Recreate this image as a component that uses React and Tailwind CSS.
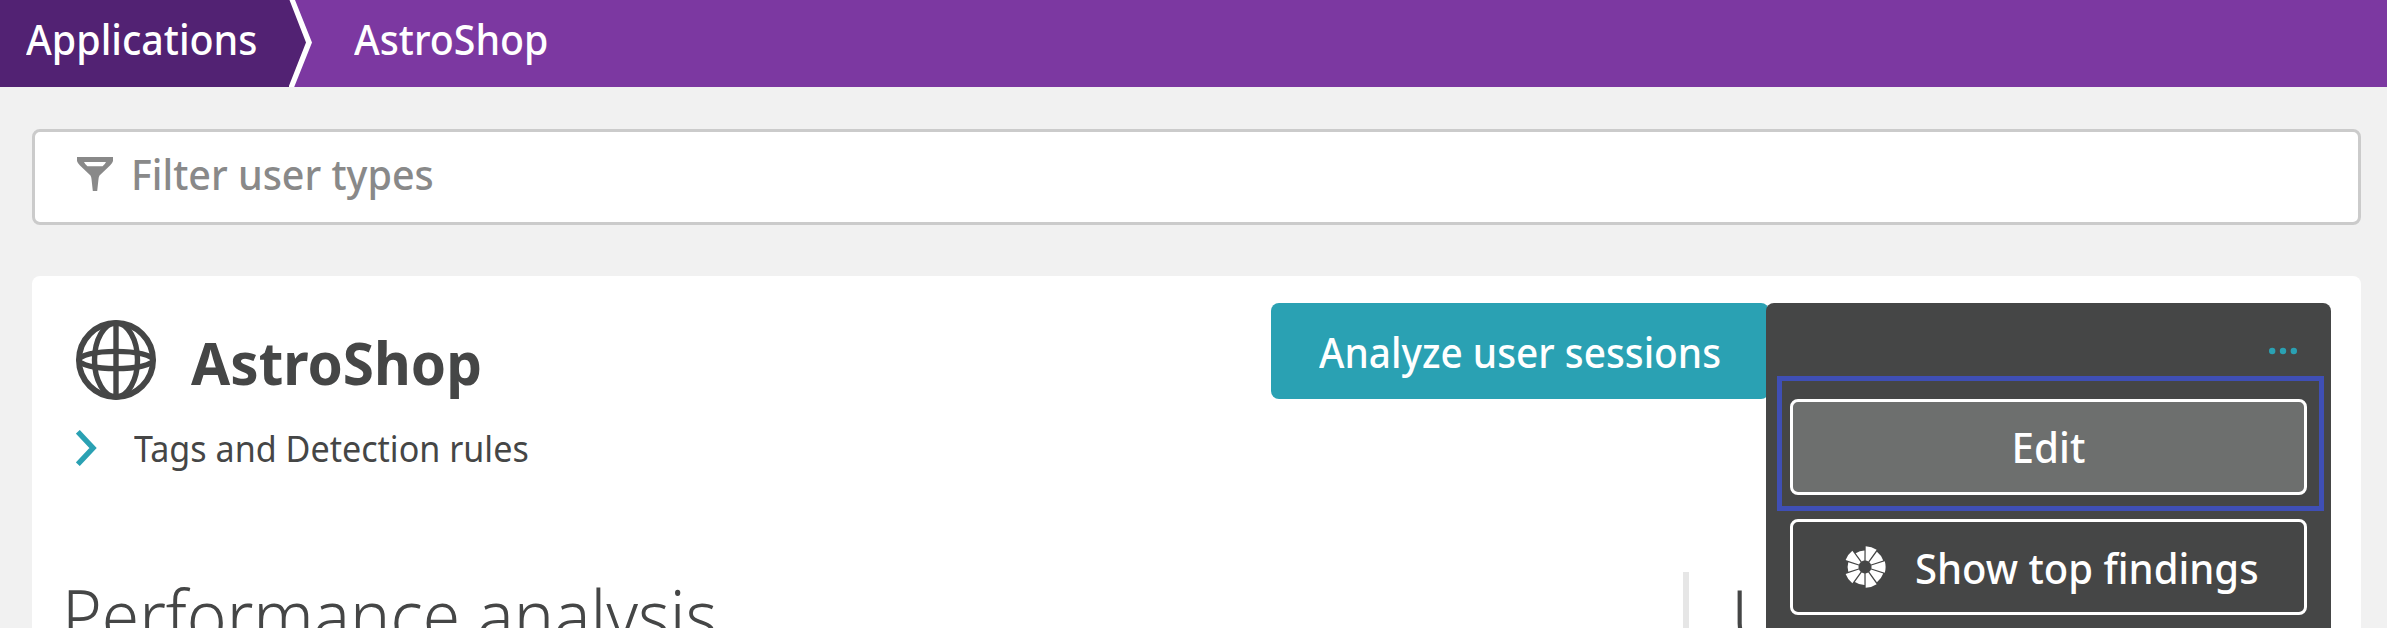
const WEDGE_RADII = [20.8, 19.4, 20.6, 19.4, 20.8, 18, 20.6, 17.4, 20.6, 16.6];

function wedgePath(index, radius) {
  const inner = 6.5;
  const at = (r, deg) => {
    const a = (deg * Math.PI) / 180;
    return `${(21 + r * Math.sin(a)).toFixed(2)} ${(21 - r * Math.cos(a)).toFixed(2)}`;
  };
  const start = index * 36;
  const end = start + 36;
  // angular inset keeps the gap between wedges parallel
  const go = 1.9;
  const gi = 5.5;
  return `M${at(inner, start + gi)}L${at(radius, start + go)}A${radius} ${radius} 0 0 1 ${at(radius, end - go)}L${at(inner, end - gi)}A${inner} ${inner} 0 0 0 ${at(inner, start + gi)}Z`;
}

function FindingsIcon() {
  return (
    <svg className="ml-[51px] size-[42px] shrink-0" viewBox="0 0 42 42" fill="#fff">
      {WEDGE_RADII.map((r, i) => (
        <path key={i} d={wedgePath(i, r)} />
      ))}
    </svg>
  );
}

function GlobeIcon() {
  return (
    <svg className="mt-11 size-20 shrink-0" viewBox="0 0 80 80" fill="none" stroke="#454646">
      <circle cx="40" cy="40" r="37" strokeWidth="6" />
      <ellipse cx="40" cy="40" rx="21.5" ry="37" strokeWidth="5.4" />
      <ellipse cx="40" cy="40" rx="37" ry="8.6" strokeWidth="5.4" />
      <path d="M40 3v74" strokeWidth="5.4" />
    </svg>
  );
}

function FilterIcon() {
  return (
    <svg className="mt-[25px] h-[34px] w-9 shrink-0" viewBox="0 0 36 34" fill="#898989" fillRule="evenodd">
      <path d="M0 0H36V4Q35.500 6 33 8.500L22.500 18.500Q21.600 20 21.500 22L20.200 34H15.800L14.500 22Q14.400 20 13.500 18.500L3 8.500Q.5 6 0 4ZM7 5Q8 7.500 10.500 9.300H25.500Q28 7.500 29 5Z" />
    </svg>
  );
}

function Breadcrumb() {
  return (
    <nav className="flex h-[87px] bg-[#7c38a1] text-[42px] font-medium leading-[78px] text-white">
      <div className="w-[289px] bg-[#522273] pl-[26px]">
        <span className="inline-block origin-left scale-x-[0.938] whitespace-nowrap">Applications</span>
      </div>
      <svg className="h-[87px] w-6 shrink-0" viewBox="0 0 24 87">
        <path d="M0 0H2L18 42.500L1 87H0Z" fill="#522273" />
        <path d="M.5 0H6L23 42.500L5.200 87H-.5L17 42.500Z" fill="#fff" />
      </svg>
      <span className="ml-[41px] inline-block origin-left scale-x-[0.936] whitespace-nowrap">AstroShop</span>
    </nav>
  );
}

function ActionMenu() {
  return (
    <div className="absolute left-[1734px] top-[27px] h-[340px] w-[565px] rounded-t-lg bg-[#454646]">
      <div className="flex h-[73px] justify-end pr-[34px]">
        <svg className="mt-11 h-2 w-7" viewBox="0 0 28 8" fill="#2aa1b3">
          <circle cx="3.200" cy="4" r="3.200" />
          <circle cx="14" cy="4" r="3.200" />
          <circle cx="24.800" cy="4" r="3.200" />
        </svg>
      </div>
      <div className="ml-[11px] h-[135px] w-[547px] border-[5px] border-[#3f4fb5] pl-2 pt-[18px]">
        <button className="flex h-24 w-[517px] items-center justify-center rounded-lg border-[3px] border-white bg-[#6d6f6e] pb-px pr-px">
          <span className="inline-block scale-x-[0.96]">Edit</span>
        </button>
      </div>
      <button className="ml-6 mt-2 flex h-24 w-[517px] items-center rounded-lg border-[3px] border-white">
        <FindingsIcon />
        <span className="ml-[29px] inline-block origin-left scale-x-[0.953] whitespace-nowrap">Show top findings</span>
      </button>
    </div>
  );
}

export default function App() {
  return (
    <div className="h-[628px] w-[2387px] overflow-hidden bg-[#f1f1f1] font-['Noto_Sans',sans-serif] text-[#454646]">
      <Breadcrumb />
      <div className="ml-8 mt-[42px] flex h-24 w-[2329px] rounded-lg border-[3px] border-[#cbcbcb] bg-white pl-[42px]">
        <FilterIcon />
        <span className="ml-[18px] inline-block origin-left scale-x-[0.94] whitespace-nowrap text-[42px] font-medium leading-[84px] text-[#898989]">
          Filter user types
        </span>
      </div>

      <main className="relative ml-8 mt-[51px] h-[400px] w-[2329px] rounded-t-lg bg-white">
        <div className="flex h-[140px] pl-11">
          <GlobeIcon />
          <h1 className="ml-[35px] w-[300px] origin-left scale-x-[0.944] whitespace-nowrap text-[60px] font-bold leading-[172px]">
            AstroShop
          </h1>
          <button className="ml-[780px] mt-[27px] flex h-24 w-[498px] shrink-0 items-center rounded-lg bg-[#2aa1b3] pl-12 text-[42px] font-medium text-white">
            <span className="inline-block origin-left scale-x-[0.924] whitespace-nowrap">Analyze user sessions</span>
          </button>
        </div>
        <div className="flex h-[64px] items-center pl-11">
          <svg className="h-9 w-[22px]" viewBox="0 0 22 36" fill="none" stroke="#2aa1b3" strokeWidth="5.4">
            <path d="M1.800 1.800L17 18L1.800 34.200" />
          </svg>
          <span className="ml-[36px] mt-0.5 inline-block origin-left scale-x-[0.947] whitespace-nowrap text-[36px]">
            Tags and Detection rules
          </span>
        </div>
        <div className="mt-[92px] flex h-[56px]">
          <h2 className="ml-[30px] w-[1621px] text-[71px] font-light leading-[86px]">
            <span className="inline-block origin-left scale-x-[0.953] whitespace-nowrap">Performance analysis</span>
          </h2>
          <div className="w-1.5 bg-[#e6e6e6]" />
          <h2 className="ml-[42px] text-[71px] font-light leading-[86px]">U</h2>
        </div>
        <div className="text-[42px] font-medium text-white">
          <ActionMenu />
        </div>
      </main>
    </div>
  );
}
